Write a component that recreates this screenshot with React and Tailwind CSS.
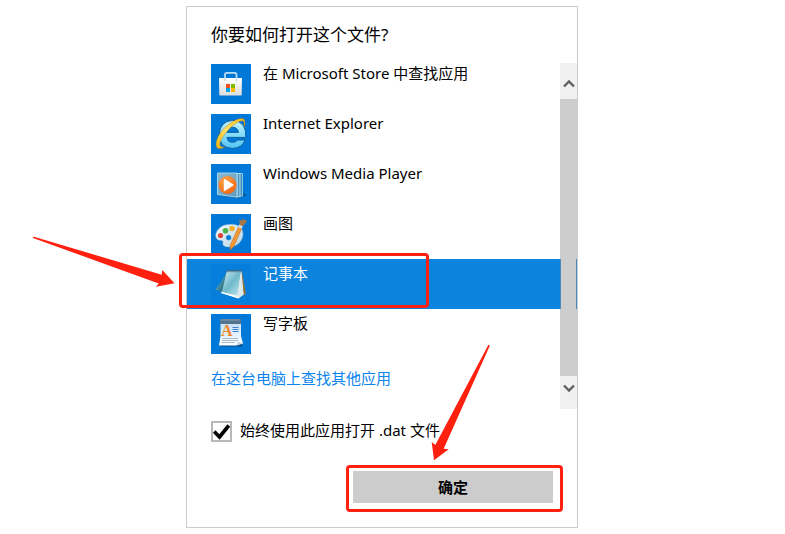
import React, { useState } from 'react';

function StoreIcon() {
  return (
    <svg viewBox="0 0 40 40" className="w-10 h-10" aria-hidden="true">
      <defs>
        <linearGradient id="storeBag" x1="0" y1="0" x2="0" y2="1">
          <stop offset="0" stopColor="#ffffff" />
          <stop offset="1" stopColor="#dcdcdc" />
        </linearGradient>
      </defs>
      <path d="M14 17V10.4Q14 8.8 15.6 8.8H23.9Q25.5 8.8 25.5 10.4V17" fill="none" stroke="#b9dcf7" strokeWidth="1.8" />
      <path d="M8 14H31L30.7 30.4Q30.6 31.6 29.4 31.6H9.6Q8.4 31.6 8.3 30.4Z" fill="url(#storeBag)" />
      <path d="M14 14V17M25.5 14V17" stroke="#c9d3da" strokeWidth="1.4" />
      <rect x="15" y="20" width="4" height="4" fill="#f04e1f" />
      <rect x="20" y="20" width="4" height="4" fill="#7fba00" />
      <rect x="15" y="24" width="4" height="4" fill="#00a0ea" />
      <rect x="20" y="24" width="4" height="4" fill="#ffb900" />
    </svg>
  );
}

function ExplorerIcon() {
  return (
    <svg viewBox="0 0 40 40" className="w-10 h-10" aria-hidden="true">
      <defs>
        <linearGradient id="ieBlue" x1="0" y1="0" x2="0" y2="1">
          <stop offset="0" stopColor="#c4f3ff" />
          <stop offset="0.5" stopColor="#86defb" />
          <stop offset="1" stopColor="#55c4f3" />
        </linearGradient>
        <linearGradient id="ieGold" x1="0" y1="1" x2="1" y2="0">
          <stop offset="0" stopColor="#f5b50e" />
          <stop offset="0.5" stopColor="#ffe169" />
          <stop offset="1" stopColor="#f6b912" />
        </linearGradient>
      </defs>
      <path
        d="M34.8 23.4H16Q16.4 28.3 21.5 28.3Q25 28.3 26.6 26H34Q31 34.4 21.2 34.4Q8.4 33.6 8.2 21Q8.8 7.4 21.4 6.4Q35.6 7 34.8 23.4ZM16 18.4H27.4Q26.8 13.4 21.7 13.2Q17 13.4 16 18.4Z"
        fill="url(#ieBlue)"
        stroke="#0b5a97"
        strokeWidth="0.9"
      />
      <path
        d="M33.4 12.6Q35.2 6.2 32.2 4.8Q27.6 3.4 18.6 9.6Q8.2 17.4 5.4 27Q4 34 7.6 34.8Q10.4 35.2 14.2 32.8Q10.4 33.8 9 31.6Q7.8 28.2 13.2 21Q19.4 12.4 26.6 8.2Q32.6 5.2 33 8.2Q33.2 10 32.6 12Z"
        fill="url(#ieGold)"
        stroke="#8a6a1c"
        strokeWidth="0.4"
      />
    </svg>
  );
}

function MediaPlayerIcon() {
  return (
    <svg viewBox="0 0 40 40" className="w-10 h-10" aria-hidden="true">
      <defs>
        <linearGradient id="wmpGlass" x1="0" y1="0" x2="1" y2="1">
          <stop offset="0" stopColor="#8fb9cf" />
          <stop offset="1" stopColor="#5f9cc0" />
        </linearGradient>
        <radialGradient id="wmpDisc" cx="0.4" cy="0.3" r="0.8">
          <stop offset="0" stopColor="#ffa64a" />
          <stop offset="1" stopColor="#ef5f0c" />
        </radialGradient>
      </defs>
      <path d="M8 31L26 34L35.5 31.5L33 29Z" fill="#0b5796" />
      <path d="M26 9.5L31.5 9.5V32L26 32.5Z" fill="#3a86b8" stroke="#8ccbe9" strokeWidth="1" />
      <path d="M26 9.5L29 9.5V32.5L26 33Z" fill="#4a98c6" stroke="#b3dff2" strokeWidth="1" />
      <path d="M6.5 9H26V33.2L6.5 30.5Z" fill="url(#wmpGlass)" stroke="#b9e2f3" strokeWidth="0.8" />
      <circle cx="16.5" cy="21" r="9" fill="url(#wmpDisc)" />
      <path d="M12.8 14.5L23 21L12.8 27.5Z" fill="#fff" />
    </svg>
  );
}

function PaintIcon() {
  return (
    <svg viewBox="0 0 40 40" className="w-10 h-10" aria-hidden="true">
      <defs>
        <linearGradient id="palette" x1="0" y1="0" x2="1" y2="1">
          <stop offset="0" stopColor="#f4fafd" />
          <stop offset="1" stopColor="#b5d4e6" />
        </linearGradient>
      </defs>
      <path
        d="M18 10.5C26 9.5 32 13 32 20C32 27 26 33 18 33C13 33 11 31 12 28C12.5 26 9 27 6.5 25.5C3.5 23 4.5 18 8 14.5C10.5 12 14 10.5 18 10.5ZM17.6 21A2.6 2.6 0 1 0 17.6 26.2A2.6 2.6 0 1 0 17.6 21Z"
        fill="url(#palette)"
        fillRule="evenodd"
        stroke="#7fb1cf"
        strokeWidth="0.5"
      />
      <circle cx="9.5" cy="21.5" r="2.6" fill="#e04438" />
      <circle cx="14.5" cy="16.8" r="2.8" fill="#4db14c" />
      <circle cx="21" cy="14.5" r="2.8" fill="#f5b325" />
      <path d="M30.6 14.6L23 32L19.4 36L19.4 31L27.4 13Z" fill="#f29a35" stroke="#cb6a17" strokeWidth="0.6" />
      <path d="M27.2 13.2L30.8 14.8L32 11.6L28.4 10Z" fill="#d7dde0" />
      <path d="M28.2 10.8C29.4 9 28.2 7.6 28 5.8L30.5 6.5L32 4.8L33.4 6.2L35.8 6.2L35 9C34 9.6 33 10.6 31.8 12.2Z" fill="#a9764a" />
    </svg>
  );
}

function NotepadIcon() {
  return (
    <svg viewBox="0 0 40 40" className="w-10 h-10" aria-hidden="true">
      <defs>
        <linearGradient id="notepadPage" x1="0" y1="0" x2="1" y2="1">
          <stop offset="0" stopColor="#d5eff3" />
          <stop offset="0.5" stopColor="#6fb9cb" />
          <stop offset="1" stopColor="#c2e8ee" />
        </linearGradient>
        <linearGradient id="notepadCurl" x1="0" y1="0" x2="1" y2="1">
          <stop offset="0" stopColor="#7ec8d5" />
          <stop offset="1" stopColor="#13576d" />
        </linearGradient>
      </defs>
      <path d="M31 8L35 30L32.5 31.5L28 12Z" fill="#8b7143" />
      <path d="M16 7.5H30.5L32.5 30.5L27.5 34.5L10 29Z" fill="#eef5f6" />
      <path d="M16 7.5H30L26.5 31.5L10.5 28Z" fill="url(#notepadPage)" />
      <path d="M15.5 8C12 15 8.5 21 4 25.5L11 28Z" fill="url(#notepadCurl)" />
      <path d="M26.5 31.5L30 8L32.5 30.5L27.5 34.2Z" fill="#dce9ec" />
      <path d="M10.5 28.5L27.4 33.8" stroke="#ffffff" strokeWidth="1.2" />
      <path d="M15.5 7H31" stroke="#4f6065" strokeWidth="2.4" strokeDasharray="1 1" />
    </svg>
  );
}

function WordpadIcon() {
  return (
    <svg viewBox="0 0 40 40" className="w-10 h-10" aria-hidden="true">
      <defs>
        <linearGradient id="wordpadPage" x1="0" y1="0" x2="0" y2="1">
          <stop offset="0" stopColor="#c4e1f7" />
          <stop offset="1" stopColor="#ffffff" />
        </linearGradient>
      </defs>
      <path d="M9 30H31V32.5H9Z" fill="#0b4c83" />
      <path d="M9.5 9H30V22L32 29.5L25 31.5H8L9.5 22Z" fill="url(#wordpadPage)" />
      <path d="M32 29.5L25 31.5L27 27.5Z" fill="#c9d8e3" />
      <rect x="9" y="5" width="21" height="5" rx="0.8" fill="#53738d" />
      <path d="M9.5 6H29.5" stroke="#8ba7bc" strokeWidth="0.8" />
      <text x="10" y="22" fontFamily="Liberation Serif, serif" fontWeight="700" fontSize="16" fill="#ef8424">
        A
      </text>
      <path d="M21.5 13.5H27.5M21.5 15.5H27.5M21.5 17.5H27.5" stroke="#3b7ed2" strokeWidth="1" />
      <path d="M11.5 24.5H27M11 26.5H27M10.5 28.5H24" stroke="#a2b4c2" strokeWidth="0.9" />
    </svg>
  );
}

const apps = [
  { id: 'store', name: '在 Microsoft Store 中查找应用', Icon: StoreIcon },
  { id: 'ie', name: 'Internet Explorer', Icon: ExplorerIcon },
  { id: 'wmp', name: 'Windows Media Player', Icon: MediaPlayerIcon },
  { id: 'paint', name: '画图', Icon: PaintIcon },
  { id: 'notepad', name: '记事本', Icon: NotepadIcon, marked: true },
  { id: 'wordpad', name: '写字板', Icon: WordpadIcon },
];

function ScrollBar() {
  return (
    <div className="absolute top-1 bottom-0 right-0 w-[17px] flex flex-col">
      <button aria-label="向上滚动" className="h-9 bg-[#f0f0f0] flex items-center justify-center">
        <svg viewBox="0 0 12 10" className="w-3 h-[10px] mt-[6px]">
          <path d="M1 7.5L6 2.5L11 7.5" fill="none" stroke="#606060" strokeWidth="2.4" />
        </svg>
      </button>
      <div className="flex-1 bg-[#cdcdcd] bg-clip-padding border-x border-[#929292]/46" />
      <button aria-label="向下滚动" className="h-[33px] bg-[#f0f0f0] flex items-center justify-center">
        <svg viewBox="0 0 12 10" className="w-3 h-[10px] mb-[10px]">
          <path d="M1 2.5L6 7.5L11 2.5" fill="none" stroke="#606060" strokeWidth="2.4" />
        </svg>
      </button>
    </div>
  );
}

export default function App() {
  const [selected, setSelected] = useState('notepad');
  const [always, setAlways] = useState(true);

  return (
    <main className="min-h-screen bg-white pl-[186px] pt-[6px] pb-[6px] text-black text-[15px] leading-5 font-['Noto_Sans','Noto_Sans_CJK_SC',sans-serif]">
      <section className="relative w-full max-w-[392px] border border-[#cccccc] bg-white">
        <h1 className="pl-6 pt-4 pb-3 text-[17px] leading-6">你要如何打开这个文件?</h1>

        {/* App list */}
        <div className="relative pb-[21px]">
          <ul>
            {apps.map(({ id, name, Icon, marked }) => (
              <li key={id} className="relative">
                <button
                  onClick={() => setSelected(id)}
                  className={`w-full h-[50px] pl-6 flex items-start gap-3 text-left ${
                    selected === id ? 'bg-[#0c83dc] text-white' : ''
                  }`}
                >
                  <span className={`mt-[5px] shrink-0 ${selected === id ? 'bg-[#067edb]' : 'bg-[#0078d7]'}`}>
                    <Icon />
                  </span>
                  <span className="mt-1">{name}</span>
                </button>
                {marked && (
                  <div className="absolute -left-2 -top-[6px] w-[250px] h-[55px] border-3 border-[#ff2010] rounded-sm pointer-events-none" />
                )}
              </li>
            ))}
          </ul>
          <a href="#more" className="block w-fit ml-6 mt-[9px] text-[#0a84ee]">
            在这台电脑上查找其他应用
          </a>
          <ScrollBar />
        </div>

        <label className="flex items-start gap-2 pl-6 mt-3 w-fit leading-[18px]">
          <span className="relative w-[21px] h-[21px]">
            <input
              type="checkbox"
              checked={always}
              onChange={(e) => setAlways(e.target.checked)}
              className="peer block appearance-none w-[21px] h-[21px] border-2 border-[#b8b8b8] bg-white"
            />
            <svg viewBox="0 0 21 21" className="absolute inset-0 hidden peer-checked:block pointer-events-none">
              <path d="M3.2 10.5L8.5 16L17.8 4.5" fill="none" stroke="#000" strokeWidth="3.6" />
            </svg>
          </span>
          始终使用此应用打开 .dat 文件
        </label>

        {/* Confirm */}
        <div className="flex justify-end mt-[29px] pr-6 pb-6">
          <div className="relative w-[200px]">
            <button className="w-full h-8 bg-[#cccccc] font-bold">确定</button>
            <div className="absolute -left-[7px] -top-[6px] w-[217px] h-[47px] border-3 border-[#ff2010] rounded-sm pointer-events-none" />
          </div>
        </div>

        {/* Pointer arrows */}
        <svg
          viewBox="0 0 143 52"
          className="absolute -left-[155px] top-[229px] w-[143px] h-[52px] pointer-events-none"
          aria-hidden="true"
        >
          <path d="M1 1L2 0.8L129.7 38.7L130.3 34L142.5 47.3L124 50.7L126.7 47.5L1 2Z" fill="#ff2010" />
        </svg>
        <svg
          viewBox="0 0 60 117"
          className="absolute left-[244px] top-[337px] w-[60px] h-[117px] pointer-events-none"
          aria-hidden="true"
        >
          <path d="M57.3 1L59 1.3L12.7 104.7L17.7 105.3L3 116.3L0.7 98L4.3 101Z" fill="#ff2010" />
        </svg>
      </section>
    </main>
  );
}
